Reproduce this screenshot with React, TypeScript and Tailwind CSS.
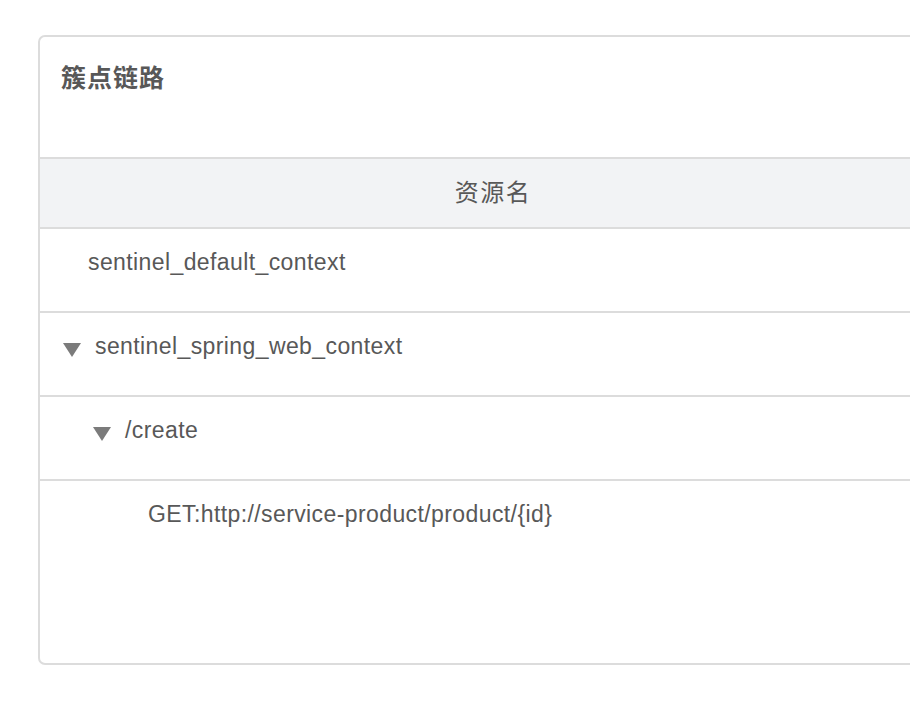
import React from 'react';

interface Node {
  name: string;
  level: number;
  expandable: boolean;
}

const rows: Node[] = [
  { name: 'sentinel_default_context', level: 0, expandable: false },
  { name: 'sentinel_spring_web_context', level: 0, expandable: true },
  { name: '/create', level: 1, expandable: true },
  { name: 'GET:http://service-product/product/{id}', level: 2, expandable: false },
];

const Caret: React.FC = () => (
  <svg width="18" height="15" viewBox="0 0 18 15" className="mt-[11px] shrink-0">
    <path d="M0 1 L18 1 L9 15 Z" fill="#7b7b7b" />
  </svg>
);

const indents = ['pl-[23px]', 'pl-[53px]', 'pl-[83px]'];

const App: React.FC = () => {
  return (
    <div className="w-[910px] h-[710px] overflow-hidden bg-white" style={{ fontFamily: '"Liberation Sans", Arial, "Noto Sans CJK SC", sans-serif' }}>
      <div className="ml-[38px] mt-[35px] w-[912px] h-[630px] border-2 border-[#dcdcdc] rounded-[7px] flex flex-col text-[#585858]">
        <div className="h-[120px] pl-[21px] pt-[24px]">
          <h2 className="text-[25px] font-bold leading-[34px] tracking-[1px]">簇点链路</h2>
        </div>
        <div className="h-[72px] border-y-2 border-[#dcdcdc] bg-[#f2f3f5] flex items-center">
          <div className="w-[906px] text-center text-[24px] leading-[30px] tracking-[1.5px]">资源名</div>
        </div>
        {rows.map((row, i) => (
          <div
            key={row.name}
            className={
              i < rows.length - 1
                ? 'h-[84px] border-b-2 border-[#dcdcdc] pt-[18px]'
                : 'flex-1 pt-[18px]'
            }
          >
            <div className={`flex items-start gap-[14px] ${indents[row.level]}`}>
              {row.expandable ? <Caret /> : <span className="w-[11px] shrink-0" />}
              <span className="text-[23px] leading-[30px] tracking-[0.4px]">{row.name}</span>
            </div>
          </div>
        ))}
      </div>
    </div>
  );
};

export default App;
